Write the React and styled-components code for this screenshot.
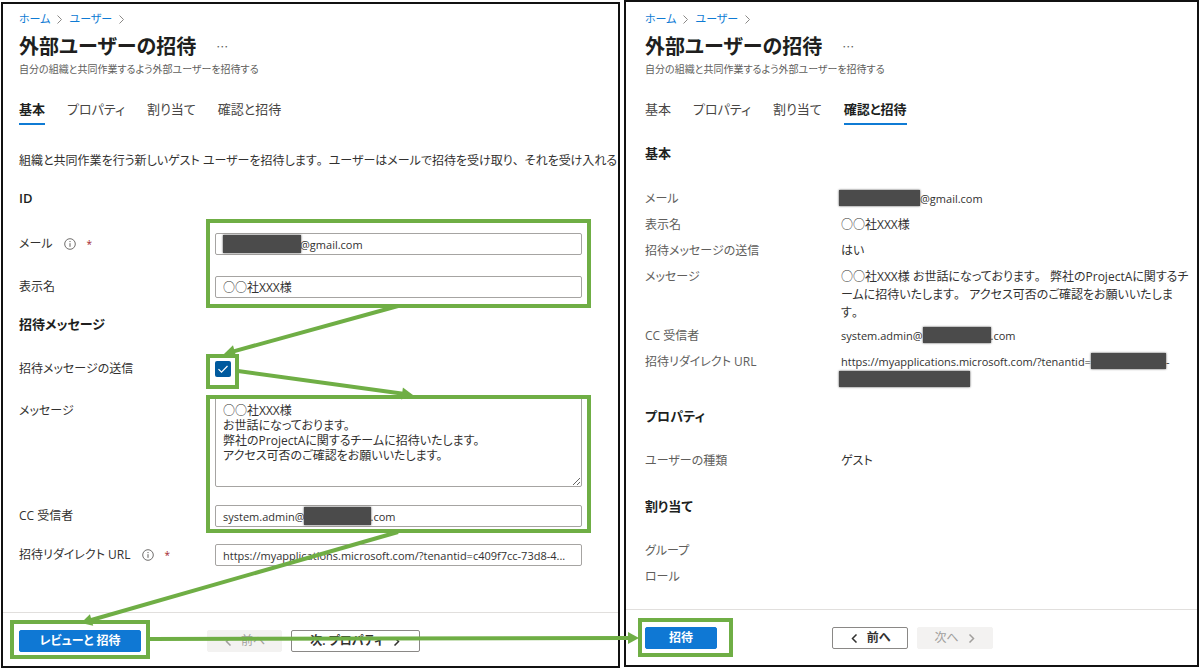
import React from 'react';
import styled, { createGlobalStyle, css } from 'styled-components';

const GREEN = '#6fae45';

const GlobalStyle = createGlobalStyle`
  * {
    box-sizing: border-box;
  }
  body {
    margin: 0;
    background: #fff;
    color: #323130;
    font-family: 'Open Sans', 'Noto Sans CJK JP', sans-serif;
    font-size: 12px;
    line-height: 18px;
    font-feature-settings: 'palt';
  }
  button, input, textarea {
    font: inherit;
    font-feature-settings: inherit;
    color: inherit;
  }
`

const Page = styled.div`
  position: relative;
  display: grid;
  grid-template-columns: 619fr 575fr;
  column-gap: 4px;
  min-height: 100vh;
  padding: 0 1px;
`
const Panel = styled.section`
  display: flex;
  flex-direction: column;
  min-width: 0;
  margin: ${props => props.$low ? '2px 0 0' : '0 0 1px'};
  border: 2px solid #111;
`
const Content = styled.div`
  flex: 1;
  padding: ${props => props.$low ? '5px' : '7px'} 0 0 ${props => props.$low ? '16px' : '19px'};
  overflow: hidden;
`

const Breadcrumb = styled.nav`
  display: flex;
  align-items: center;
  gap: 5px;
  height: 20px;
  font-size: 11px;
  color: #8a8886;

  a {
    color: #0f7bd4;
    text-decoration: none;
  }
`
const TitleRow = styled.div`
  display: flex;
  align-items: center;
  gap: 20px;
  height: 28px;
  margin-top: 4px;
`
const Title = styled.h1`
  margin: 0;
  font-size: 20px;
  font-weight: 600;
  line-height: 28px;
  color: #201f1e;
`
const MoreButton = styled.button`
  padding: 0;
  border: 0;
  background: none;
  color: #605e5c;
  font-family: 'Noto Sans CJK JP', sans-serif;
  line-height: 18px;
`
const Subtitle = styled.p`
  margin: 0;
  font-size: 10px;
  line-height: 16px;
  color: #605e5c;
`
const Tabs = styled.div`
  display: flex;
  gap: 22px;
  margin-top: 22px;
`
const Tab = styled.button`
  height: 26px;
  padding: 0 0 4px;
  border: 0;
  border-bottom: 2px solid ${props => props.$active ? '#0f7bd4' : 'transparent'};
  background: none;
  font-size: 13px;
  font-weight: ${props => props.$active ? 700 : 400};
  color: ${props => props.$active ? '#201f1e' : '#484644'};
`
const Intro = styled.p`
  margin: 27px 0 0;
  white-space: nowrap;
`
const SectionTitle = styled.h2`
  margin: ${props => props.$top}px 0 0;
  font-size: 13px;
  line-height: 18px;
  font-weight: 600;
  color: #201f1e;
`
/* punctuation keeps its full-width box */
const FullWidth = styled.span`
  font-feature-settings: 'palt' 0;
`
const Latin = styled.span`
  font-size: 11px;
`

const Highlight = styled.div`
  position: relative;
  width: ${props => props.$fit ? 'fit-content' : 'auto'};

  &::after {
    content: '';
    position: absolute;
    inset: ${props => props.$inset};
    border: 4px solid ${GREEN};
    pointer-events: none;
  }
`
const Field = styled.div`
  display: grid;
  grid-template-columns: 196px minmax(0, 1fr);
  align-items: ${props => props.$top ? 'start' : 'center'};
  margin-top: ${props => props.$gap}px;
  padding-right: 36px;
`
const Label = styled.label`
  display: flex;
  align-items: center;
  gap: 11px;
  padding-top: ${props => props.$top ? '5px' : '0'};
  white-space: nowrap;
`
const Required = styled.span`
  color: #a4262c;
  font-size: 10px;
`
const boxed = css`
  display: block;
  width: 100%;
  border: 1px solid #a6a4a2;
  border-radius: 2px;
  background: #fff;
`
const TextInput = styled.input`
  ${boxed}
  height: 22px;
  padding: 0 7px;
  font-size: ${props => props.$latin ? '11px' : '12px'};
  text-overflow: ellipsis;
`
const TextArea = styled.textarea`
  ${boxed}
  height: 90px;
  padding: 5px 7px;
  line-height: 15px;
  resize: vertical;
`
const InputWrap = styled.div`
  position: relative;
`
const mask = css`
  background: #4b4b4b;
  box-shadow: 0 0 2px #4b4b4b;
`
const InputMask = styled.span`
  ${mask}
  position: absolute;
  top: 2px;
  left: ${props => props.$left}px;
  width: ${props => props.$width}px;
  height: 18px;
`
const Mask = styled.span`
  ${mask}
  display: inline-block;
  width: ${props => props.$width}px;
  height: 16px;
  margin-left: ${props => props.$out ? '-2px' : '0'};
  vertical-align: top;
`
const CheckWrap = styled.span`
  position: relative;
  display: block;
  width: 16px;
  height: 16px;

  svg {
    position: absolute;
    inset: 0;
    pointer-events: none;
  }
`
const Checkbox = styled.input`
  appearance: none;
  display: block;
  width: 16px;
  height: 16px;
  margin: 0;
  border-radius: 2px;
  background: #005a9e;
`

const Summary = styled.dl`
  display: grid;
  grid-template-columns: 196px minmax(0, 1fr);
  grid-auto-rows: minmax(21px, auto);
  row-gap: 5px;
  margin: ${props => props.$top}px 0 0;
  padding-right: 8px;

  dt {
    color: #605e5c;
  }
  dd {
    margin: 0;
    line-break: loose;
  }
`

const Footer = styled.footer`
  display: grid;
  grid-template-columns: ${props => props.$first} 1fr;
  align-items: start;
  height: ${props => props.$low ? '54px' : '56px'};
  padding: 17px 0 0 ${props => props.$low ? '16px' : '19px'};
  border-top: 1px solid #e1dfdd;
`
const Buttons = styled.div`
  display: flex;
  gap: 9px;
`
const Button = styled.button`
  display: flex;
  align-items: center;
  justify-content: center;
  gap: 8px;
  width: ${props => props.$width}px;
  height: 22px;
  padding: 0;
  border: 1px solid #8a8886;
  border-radius: 2px;
  background: #fff;
  font-weight: 600;

  &:disabled {
    border-color: #f3f2f1;
    background: #f3f2f1;
    color: #a19f9d;
    font-weight: 400;
  }
`
const PrimaryButton = styled(Button)`
  border-color: #0f78d4;
  background: #0f78d4;
  color: #fff;
`

const Arrows = styled.svg`
  position: absolute;
  top: 0;
  left: 0;
  pointer-events: none;
`

const Chevron = ({ left, size = 9, stroke = 1 }) => (
  <svg width={size} height={size} viewBox="0 0 9 9" fill="none" stroke="currentColor" strokeWidth={stroke}>
    <path d={left ? 'M6.5 .5 2.5 4.5l4 4' : 'M2.5 .5l4 4-4 4'} />
  </svg>
)

const InfoIcon = () => (
  <svg width="12" height="12" viewBox="0 0 12 12" fill="none" stroke="#605e5c">
    <circle cx="6" cy="6" r="5.3" strokeWidth=".9" />
    <path d="M6 5.2v3.6M6 3v1.1" />
  </svg>
)

const Arrow = ({ from, to }) => {
  const angle = Math.atan2(to[1] - from[1], to[0] - from[0])
  const endX = to[0] - 8 * Math.cos(angle)
  const endY = to[1] - 8 * Math.sin(angle)
  return (
    <g>
      <line x1={from[0]} y1={from[1]} x2={endX} y2={endY} stroke={GREEN} strokeWidth="4" />
      <path
        d="M0 0l-11-6v12z"
        fill={GREEN}
        transform={`translate(${to[0]} ${to[1]}) rotate(${angle * 180 / Math.PI})`}
      />
    </g>
  )
}

const Sentence = ({ children }) => children.split(/([、。])/).map((part, i) => (
  i % 2 ? <FullWidth key={i}>{part}</FullWidth> : part
))

const TABS = ['基本', 'プロパティ', '割り当て', '確認と招待']

const Header = ({ active }) => (
  <header>
    <Breadcrumb>
      <a href="#home">ホーム</a>
      <Chevron />
      <a href="#users">ユーザー</a>
      <Chevron />
    </Breadcrumb>
    <TitleRow>
      <Title>外部ユーザーの招待</Title>
      <MoreButton type="button">…</MoreButton>
    </TitleRow>
    <Subtitle>自分の組織と共同作業するよう外部ユーザーを招待する</Subtitle>
    <Tabs role="tablist">
      {TABS.map(tab => (
        <Tab key={tab} type="button" role="tab" aria-selected={tab === active} $active={tab === active}>
          {tab}
        </Tab>
      ))}
    </Tabs>
  </header>
)

const MESSAGE = [
  '○○社XXX様',
  'お世話になっております。',
  '弊社のProjectAに関するチームに招待いたします。',
  'アクセス可否のご確認をお願いいたします。',
]

const InviteForm = () => (
  <Panel $low>
    <Content $low>
      <Header active="基本" />
      <Intro><Sentence>組織と共同作業を行う新しいゲスト ユーザーを招待します。ユーザーはメールで招待を受け取り、それを受け入れる</Sentence></Intro>
      <SectionTitle $top={19}>ID</SectionTitle>
      <Highlight $inset="-14px 27px -10px 187px">
        <Field $gap={26}>
          <Label htmlFor="mail">メール <InfoIcon /><Required>*</Required></Label>
          <InputWrap>
            <TextInput $latin id="mail" defaultValue={'\u2003\u2003\u2003\u2003\u2003\u2003\u2003@gmail.com'} />
            <InputMask $left={8} $width={78} />
          </InputWrap>
        </Field>
        <Field $gap={21}>
          <Label htmlFor="name">表示名</Label>
          <TextInput id="name" defaultValue="○○社XXX様" />
        </Field>
      </Highlight>
      <SectionTitle $top={17}>招待メッセージ</SectionTitle>
      <Field $gap={27}>
        <Label htmlFor="send">招待メッセージの送信</Label>
        <Highlight $fit $inset="-7px -8px -12px -9px">
          <CheckWrap>
            <Checkbox id="send" type="checkbox" defaultChecked />
            <svg width="16" height="16" viewBox="0 0 16 16" fill="none" stroke="#fff" strokeWidth="1.2">
              <path d="M3.5 8.2l3 3 6-6.2" />
            </svg>
          </CheckWrap>
        </Highlight>
      </Field>
      <Highlight $inset="-2px 27px -6px 187px">
        <Field $top $gap={19}>
          <Label $top htmlFor="message">メッセージ</Label>
          <TextArea id="message" defaultValue={MESSAGE.join('\n')} />
        </Field>
        <Field $gap={18}>
          <Label htmlFor="cc">CC 受信者</Label>
          <InputWrap>
            <TextInput $latin id="cc" defaultValue={'system.admin@\u2003\u2003\u2003\u2003\u2003\u2003.com'} />
            <InputMask $left={89} $width={67} />
          </InputWrap>
        </Field>
      </Highlight>
      <Field $gap={17}>
        <Label htmlFor="url">招待リダイレクト URL <InfoIcon /><Required>*</Required></Label>
        <TextInput $latin id="url" defaultValue="https://myapplications.microsoft.com/?tenantid=c409f7cc-73d8-4..." />
      </Field>
    </Content>
    <Footer $low $first="188px">
      <Highlight $fit $inset="-10px -9px -7px -9px">
        <PrimaryButton type="button" $width={122}>レビューと 招待</PrimaryButton>
      </Highlight>
      <Buttons>
        <Button type="button" disabled $width={75}><Chevron left stroke={1.5} />前へ</Button>
        <Button type="button" $width={129}>次: プロパティ<Chevron stroke={1.5} /></Button>
      </Buttons>
    </Footer>
  </Panel>
)

const InviteReview = () => (
  <Panel>
    <Content>
      <Header active="確認と招待" />
      <SectionTitle $top={19}>基本</SectionTitle>
      <Summary $top={28}>
        <dt>メール</dt>
        <dd><Mask $out $width={81} /><Latin>@gmail.com</Latin></dd>
        <dt>表示名</dt>
        <dd>○○社XXX様</dd>
        <dt>招待メッセージの送信</dt>
        <dd>はい</dd>
        <dt>メッセージ</dt>
        <dd><Sentence>{MESSAGE.join(' ')}</Sentence></dd>
        <dt>CC 受信者</dt>
        <dd><Latin>system.admin@<Mask $width={68} />.com</Latin></dd>
        <dt>招待リダイレクト URL</dt>
        <dd><Latin>https://myapplications.microsoft.com/?tenantid=<Mask $width={75} />-<br /><Mask $out $width={131} /></Latin></dd>
      </Summary>
      <SectionTitle $top={18}>プロパティ</SectionTitle>
      <Summary $top={27}>
        <dt>ユーザーの種類</dt>
        <dd>ゲスト</dd>
      </Summary>
      <SectionTitle $top={24}>割り当て</SectionTitle>
      <Summary $top={27}>
        <dt>グループ</dt>
        <dd />
        <dt>ロール</dt>
        <dd />
      </Summary>
    </Content>
    <Footer $first="187px">
      <Highlight $fit $inset="-9px -16px -8px -7px">
        <PrimaryButton type="button" $width={72}>招待</PrimaryButton>
      </Highlight>
      <Buttons>
        <Button type="button" $width={76}><Chevron left stroke={1.5} />前へ</Button>
        <Button type="button" disabled $width={76}>次へ<Chevron stroke={1.5} /></Button>
      </Buttons>
    </Footer>
  </Panel>
)

const App = () => (
  <>
    <GlobalStyle />
    <Page>
      <InviteForm />
      <InviteReview />
      <Arrows width="700" height="668" aria-hidden="true">
        <Arrow from={[398, 306]} to={[224, 354]} />
        <Arrow from={[238, 371]} to={[413, 395]} />
        <Arrow from={[398, 532]} to={[81, 623]} />
        <Arrow from={[149, 639]} to={[639, 638]} />
      </Arrows>
    </Page>
  </>
)

export default App;
